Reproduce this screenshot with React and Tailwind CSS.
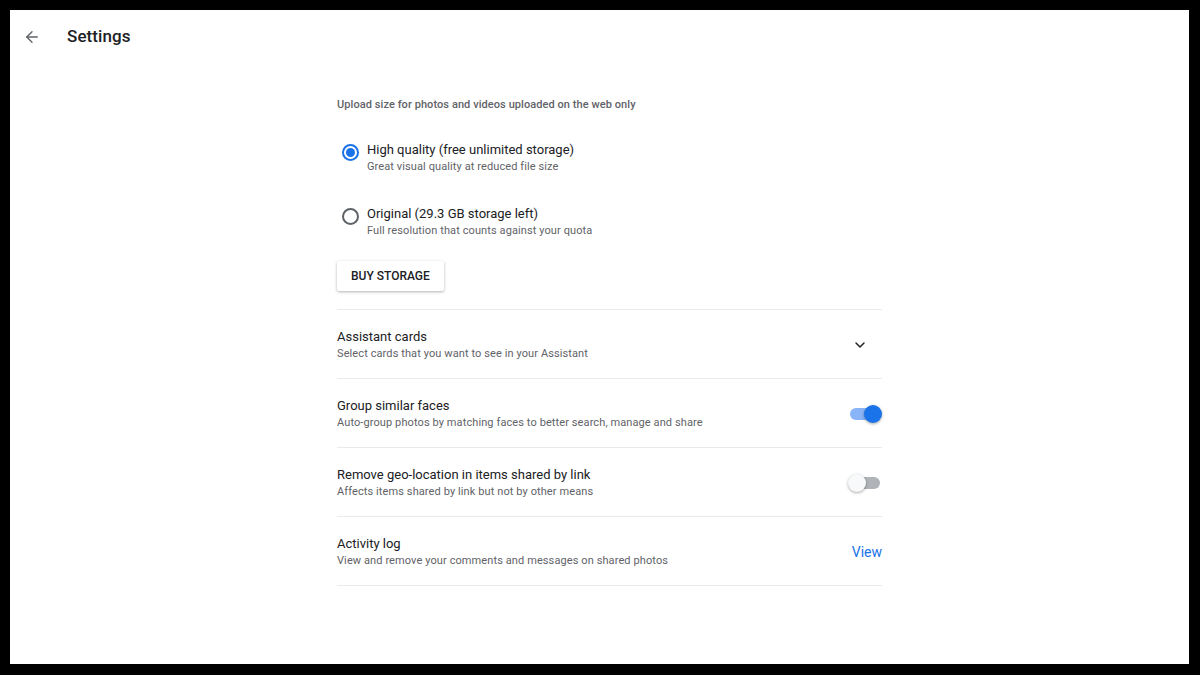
import { ArrowLeft, ChevronDown } from 'lucide-react';

const font = { fontFamily: 'Roboto, "Noto Sans", sans-serif' };

const Radio = ({ checked }) => (
  <div
    className={`w-[17px] h-[17px] rounded-full border-2 flex items-center justify-center shrink-0 ${
      checked ? 'border-[#1a73e8]' : 'border-[#5f6368]'
    }`}
  >
    {checked && <div className="w-[9px] h-[9px] rounded-full bg-[#1a73e8]" />}
  </div>
);

const Toggle = ({ on }) => (
  <div className="relative w-[34px] h-[20px] flex items-center">
    <div className={`w-[30px] h-[12px] rounded-full ml-[2px] ${on ? 'bg-[#8ab4f8]' : 'bg-[#b0b3b8]'}`} />
    <div
      className={`absolute top-[1px] w-[18px] h-[18px] rounded-full shadow-[0_1px_3px_rgba(0,0,0,0.35)] ${
        on ? 'right-0 bg-[#1a73e8]' : 'left-0 bg-[#f8f9fa]'
      }`}
    />
  </div>
);

const Row = ({ title, sub, children }) => (
  <div className="h-[69px] pt-[2px] border-t border-[#e8eaed] flex items-center justify-between">
    <div>
      <div className="text-[13px] leading-[17px] text-[#202124]">{title}</div>
      <div className="text-[11px] leading-[17px] tracking-[0.1px] text-[#5f6368]">{sub}</div>
    </div>
    {children}
  </div>
);

const App = () => {
  return (
    <div className="bg-black h-[675px] pt-[10px] pl-[10px] pr-[11px] pb-[11px]" style={font}>
      <div className="bg-white h-full">
        {/* Header */}
        <div className="h-[53px] pt-[1px] flex items-center">
          <ArrowLeft className="w-[18px] h-[18px] text-[#5f6368] ml-[13px]" strokeWidth={1.8} />
          <h1 className="ml-[26px] text-[17px] font-medium tracking-[0.1px] text-[#202124]">Settings</h1>
        </div>

        <div className="w-[545px] ml-[327px] mt-[33px]">
          <div className="text-[11px] font-medium tracking-[0.07px] text-[#5f6368] leading-[17px]">
            Upload size for photos and videos uploaded on the web only
          </div>

          <div className="mt-[28px] flex items-start pl-[5px]">
            <div className="pt-[3px]"><Radio checked /></div>
            <div className="ml-[8px]">
              <div className="text-[13px] leading-[17px] text-[#202124]">High quality (free unlimited storage)</div>
              <div className="text-[11px] leading-[17px] tracking-[0.1px] text-[#5f6368]">Great visual quality at reduced file size</div>
            </div>
          </div>

          <div className="mt-[30px] flex items-start pl-[5px]">
            <div className="pt-[3px]"><Radio /></div>
            <div className="ml-[8px]">
              <div className="text-[13px] leading-[17px] text-[#202124]">Original (29.3 GB storage left)</div>
              <div className="text-[11px] leading-[17px] tracking-[0.1px] text-[#5f6368]">Full resolution that counts against your quota</div>
            </div>
          </div>

          <button className="mt-[22px] h-[30px] px-[14px] rounded-[2px] bg-white text-[12px] font-medium text-[#202124] shadow-[0_1px_3px_rgba(0,0,0,0.3)]">
            BUY STORAGE
          </button>

          <div className="mt-[18px]">
            <Row title="Assistant cards" sub="Select cards that you want to see in your Assistant">
              <ChevronDown className="w-[16px] h-[16px] text-[#202124] mr-[14px]" strokeWidth={2.2} />
            </Row>
            <Row title="Group similar faces" sub="Auto-group photos by matching faces to better search, manage and share">
              <Toggle on />
            </Row>
            <Row title="Remove geo-location in items shared by link" sub="Affects items shared by link but not by other means">
              <Toggle />
            </Row>
            <Row title="Activity log" sub="View and remove your comments and messages on shared photos">
              <span className="text-[14px] text-[#1a73e8]">View</span>
            </Row>
            <div className="border-t border-[#e8eaed]" />
          </div>
        </div>
      </div>
    </div>
  );
};

export default App;
